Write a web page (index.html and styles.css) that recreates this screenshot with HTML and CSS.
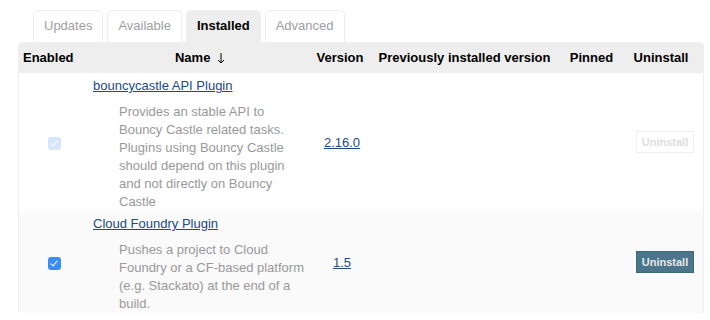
FILE: index.html
```html
<!DOCTYPE html>
<html lang="en">
<head>
	<meta charset="UTF-8">
	<title>Plugin Manager</title>
	<link rel="stylesheet" href="styles.css">
</head>
<body>
<div id="plugins">
	<ul id="tabs">
		<li class="tab">Updates</li>
		<li class="tab">Available</li>
		<li class="tab selected">Installed</li>
		<li class="tab">Advanced</li>
	</ul>
	<table id="plugin_table">
		<colgroup>
			<col class="col-enabled">
			<col class="col-name">
			<col class="col-version">
			<col class="col-previous">
			<col class="col-pinned">
			<col class="col-uninstall">
		</colgroup>
		<thead>
			<tr>
				<th class="th-enabled">Enabled</th>
				<th>Name <svg class="sort-arrow" width="8" height="12" viewBox="0 0 8 12"><path d="M4 1 V11 M1 8 L4 11 L7 8" fill="none" stroke="#000" stroke-width="1"/></svg></th>
				<th>Version</th>
				<th>Previously installed version</th>
				<th>Pinned</th>
				<th>Uninstall</th>
			</tr>
		</thead>
		<tbody>
			<tr class="plugin">
				<td class="enabled"><input type="checkbox" checked disabled></td>
				<td class="name">
					<a href="#">bouncycastle API Plugin</a>
					<div class="excerpt">Provides an stable API to Bouncy Castle related tasks. Plugins using Bouncy Castle should depend on this plugin and not directly on Bouncy Castle</div>
				</td>
				<td class="version"><a href="#">2.16.0</a></td>
				<td></td>
				<td></td>
				<td class="uninstall"><button class="btn" disabled>Uninstall</button></td>
			</tr>
			<tr class="plugin odd">
				<td class="enabled"><input type="checkbox" checked></td>
				<td class="name">
					<a href="#">Cloud Foundry Plugin</a>
					<div class="excerpt">Pushes a project to Cloud Foundry or a CF-based platform (e.g. Stackato) at the end of a build.</div>
				</td>
				<td class="version"><a href="#">1.5</a></td>
				<td></td>
				<td></td>
				<td class="uninstall"><button class="btn">Uninstall</button></td>
			</tr>
		</tbody>
	</table>
</div>
</body>
</html>
```

FILE: styles.css
```css
* {
	margin: 0;
	padding: 0;
	box-sizing: border-box;
}

body {
	font-family: "Liberation Sans", Arial, sans-serif;
	font-size: 13px;
	color: #000000;
	background: #ffffff;
}

#plugins {
	padding: 10px 8px 0 18px;
}

#tabs {
	list-style: none;
	display: flex;
	gap: 4px;
	padding-left: 15px;
	height: 32px;
}

#tabs > .tab {
	height: 32px;
	line-height: 30px;
	padding: 0 10px;
	border: 1px solid #ececec;
	border-bottom: none;
	border-radius: 5px 5px 0 0;
	color: #a0a0a0;
}

#tabs > .tab.selected {
	background: #eeeeee;
	border-color: #eeeeee;
	color: #000000;
	font-weight: bold;
}

#plugin_table {
	width: 684px;
	table-layout: fixed;
	border-collapse: separate;
	border-spacing: 0;
	border-left: 1px solid #eeeeee;
	border-right: 1px solid #eeeeee;
	border-radius: 4px 4px 0 0;
}

.col-enabled { width: 70px; }
.col-name { width: 222px; }
.col-version { width: 58px; }
.col-previous { width: 191px; }
.col-pinned { width: 63px; }
.col-uninstall { width: 80px; }

#plugin_table th {
	background: #eeeeee;
	height: 31px;
	font-weight: bold;
	text-align: center;
	vertical-align: middle;
	white-space: nowrap;
}

#plugin_table th:first-child {
	border-top-left-radius: 4px;
}

#plugin_table th:last-child {
	border-top-right-radius: 4px;
	padding-right: 4px;
}

#plugin_table th.th-enabled {
	text-align: left;
	padding-left: 4px;
}

.sort-arrow {
	margin-left: 3px;
	vertical-align: -2px;
}

#plugin_table td {
	vertical-align: middle;
	text-align: center;
}

.plugin.odd > td {
	background: #fafafa;
}

a {
	color: #204a87;
}

#plugin_table td.name {
	text-align: left;
	vertical-align: top;
	padding: 4px 0 0 4px;
	line-height: 18px;
}

.excerpt {
	margin: 8px 0 0 26px;
	max-width: 190px;
	color: #999999;
}

.enabled input {
	appearance: none;
	width: 13px;
	height: 13px;
	border-radius: 3px;
	background: #3b8cf3;
	display: inline-block;
	vertical-align: middle;
	position: relative;
}

.enabled input::after {
	content: "";
	position: absolute;
	left: 4px;
	top: 2px;
	width: 3px;
	height: 6px;
	border: solid #ffffff;
	border-width: 0 1.5px 1.5px 0;
	transform: rotate(40deg);
}

.enabled input:disabled {
	background: #d5e6fc;
}

.version a {
	padding-left: 4px;
}

.uninstall {
	padding-left: 4px;
}

.btn {
	font-family: "Liberation Sans", Arial, sans-serif;
	font-size: 11px;
	font-weight: bold;
	height: 22px;
	padding: 0 5px;
	border: 1px solid #3f6679;
	background: #4b758b;
	color: #e8e8e8;
}

.btn:disabled {
	background: #ffffff;
	border-color: #eeeeee;
	color: #dddddd;
}
```
